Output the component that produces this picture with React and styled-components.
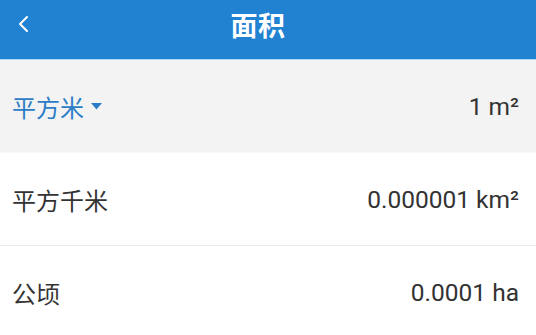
import styled, { createGlobalStyle } from 'styled-components';

const GlobalStyle = createGlobalStyle`
  html, body {
    margin: 0;
    padding: 0;
    background: #ffffff;
  }

  body {
    font-family: Roboto, 'Noto Sans CJK SC', sans-serif;
  }
`;

const Page = styled.div`
  width: 536px;
  height: 335px;
  overflow: hidden;
  background: #ffffff;
`;

const Header = styled.div`
  position: relative;
  height: 60px;
  box-sizing: border-box;
  padding: 0 20px 11px 0;
  background: #2182d2;
  border-bottom: 1px solid #a9d6fb;
  display: flex;
  align-items: center;
  justify-content: center;
`;

const BackButton = styled.div`
  position: absolute;
  left: 16px;
  top: 15px;
  display: flex;
`;

const Title = styled.h1`
  margin: 0;
  font-family: 'Noto Sans CJK SC', sans-serif;
  font-size: 27px;
  font-weight: 700;
  color: #ffffff;
  letter-spacing: 0.5px;
`;

const Row = styled.div`
  height: 92px;
  display: flex;
  align-items: center;
  justify-content: space-between;
  padding: 0 17px 0 12px;
  background: ${({ active }) => (active ? '#f3f3f3' : '#ffffff')};
  border-bottom: 1px solid ${({ active }) => (active ? '#f8f8f8' : '#e9e9e9')};
`;

const UnitName = styled.div`
  display: flex;
  align-items: center;
  gap: 7px;
  font-family: 'Noto Sans CJK SC', sans-serif;
  font-size: 24px;
  color: ${({ active }) => (active ? '#2b7dc6' : '#333333')};
`;

const Value = styled.div`
  font-family: Roboto, sans-serif;
  font-size: 24.5px;
  color: #333333;
`;

const Caret = () => (
  <svg width="11" height="7" viewBox="0 0 11 7">
    <path d="M0 0 L11 0 L5.5 6.5 Z" fill="#2b7dc6" />
  </svg>
);

const Chevron = () => (
  <svg width="14" height="18" viewBox="0 0 14 18">
    <path d="M11 2 L4 9 L11 16" fill="none" stroke="#ffffff" strokeWidth="2" strokeLinecap="round" strokeLinejoin="round" />
  </svg>
);

const units = [
  { name: '平方米', value: '1 m²', active: true },
  { name: '平方千米', value: '0.000001 km²' },
  { name: '公顷', value: '0.0001 ha' },
];

export default function App() {
  return (
    <Page>
      <GlobalStyle />
      <Header>
        <BackButton>
          <Chevron />
        </BackButton>
        <Title>面积</Title>
      </Header>
      {units.map(unit => (
        <Row key={unit.name} active={unit.active}>
          <UnitName active={unit.active}>
            {unit.name}
            {unit.active ? <Caret /> : null}
          </UnitName>
          <Value>{unit.value}</Value>
        </Row>
      ))}
    </Page>
  );
}
